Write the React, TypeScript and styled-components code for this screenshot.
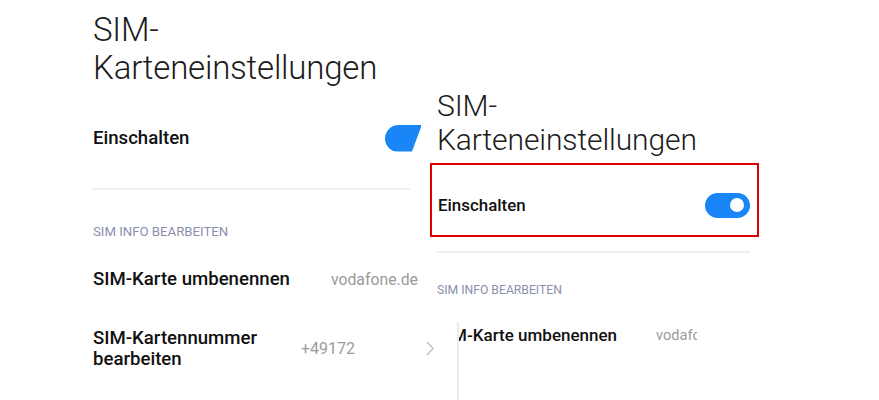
import React from "react";
import styled, { createGlobalStyle } from "styled-components";

const Global = createGlobalStyle`
  html, body { margin: 0; padding: 0; background: #ffffff; }
  body { font-family: Roboto, "Noto Sans", "Liberation Sans", Arial, sans-serif; }
`;

const Stage = styled.div`
  position: relative;
  width: 879px;
  height: 400px;
  overflow: hidden;
  background: #ffffff;
`;

const Screen = styled.div<{ $top: number; $left: number; $width: number }>`
  box-sizing: content-box;
  width: ${(p) => p.$width}px;
  padding: ${(p) => p.$top}px 0 0 ${(p) => p.$left}px;
  display: flex;
  flex-direction: column;
`;

/* second screenshot laid over the first one */
const Overlay = styled.div`
  position: absolute;
  left: 421px;
  top: 0;
  width: 458px;
  height: 400px;
  background: #ffffff;
  clip-path: polygon(0 0, 100% 0, 100% 100%, 36px 100%, 36px 322px, 0 322px);
  &::before {
    content: "";
    position: absolute;
    left: 36px;
    top: 322px;
    bottom: 0;
    width: 2px;
    background: #ececec;
  }
`;

const Title = styled.h1<{ $size: number; $lh: number; $ls: number }>`
  margin: 0;
  font-weight: 300;
  font-size: ${(p) => p.$size}px;
  line-height: ${(p) => p.$lh}px;
  letter-spacing: ${(p) => p.$ls}px;
  color: #1c1c1c;
`;

const SwitchRow = styled.div<{ $h: number; $mt: number }>`
  display: flex;
  align-items: center;
  justify-content: space-between;
  height: ${(p) => p.$h}px;
  margin-top: ${(p) => p.$mt}px;
`;

const Highlight = styled.div`
  margin: 6px -9px 0 -7px;
  padding: 12px 7px 2px 6px;
  border: 2px solid #e10000;
`;

const Label = styled.span<{ $size: number; $lh?: number }>`
  flex: 1;
  font-weight: 500;
  font-size: ${(p) => p.$size}px;
  line-height: ${(p) => (p.$lh ? `${p.$lh}px` : "normal")};
  color: #111111;
`;

const Toggle = styled.div<{ $w: number; $h: number; $knob: number; $clipped?: boolean }>`
  position: relative;
  flex: none;
  width: ${(p) => p.$w}px;
  height: ${(p) => p.$h}px;
  border-radius: ${(p) => p.$h / 2}px;
  background: #1985f6;
  ${(p) => (p.$clipped ? "clip-path: polygon(0 0, 37px 0, 27px 100%, 0 100%);" : "")}
  &::after {
    content: "";
    display: ${(p) => (p.$knob > 0 ? "block" : "none")};
    position: absolute;
    top: 50%;
    right: ${(p) => (p.$h - p.$knob) / 2 + 1}px;
    width: ${(p) => p.$knob}px;
    height: ${(p) => p.$knob}px;
    margin-top: ${(p) => -p.$knob / 2}px;
    border-radius: 50%;
    background: #ffffff;
  }
`;

const Divider = styled.div<{ $mt: number; $w?: number }>`
  margin-top: ${(p) => p.$mt}px;
  width: ${(p) => (p.$w ? `${p.$w}px` : "100%")};
  height: 2px;
  background: #f0f0f0;
`;

const SectionHeader = styled.div<{ $size: number; $lh: number; $mt: number }>`
  margin-top: ${(p) => p.$mt}px;
  font-size: ${(p) => p.$size}px;
  line-height: ${(p) => p.$lh}px;
  font-weight: 400;
  color: #8a8fae;
`;

const ItemRow = styled.div<{ $h: number; $mt?: number }>`
  display: flex;
  align-items: center;
  min-height: ${(p) => p.$h}px;
  margin-top: ${(p) => p.$mt ?? 0}px;
`;

const Value = styled.span<{ $size: number; $mr: number; $max?: number }>`
  flex: none;
  font-size: ${(p) => p.$size}px;
  color: #9b9b9b;
  white-space: nowrap;
  overflow: hidden;
  margin-right: ${(p) => p.$mr}px;
  ${(p) => (p.$max ? `max-width: ${p.$max}px;` : "")}
`;

const ChevronBox = styled.span`
  flex: none;
  display: flex;
  width: 8px;
  height: 15px;
`;

const Chevron = () => (
  <ChevronBox>
    <svg width="8" height="15" viewBox="0 0 8 15" fill="none">
      <path d="M0.8 0.8 L7.2 7.5 L0.8 14.2" stroke="#b4b4b4" strokeWidth="1.1" />
    </svg>
  </ChevronBox>
);

export default function App() {
  return (
    <>
      <Global />
      <Stage>
        <Screen $top={11} $left={93} $width={341}>
          <Title $size={33} $lh={38} $ls={-0.2}>
            SIM-
            <br />
            Karteneinstellungen
          </Title>
          <SwitchRow $h={56} $mt={23}>
            <Label $size={18.6}>Einschalten</Label>
            <Toggle $w={49} $h={27} $knob={0} $clipped />
          </SwitchRow>
          <Divider $mt={22} $w={317} />
          <SectionHeader $size={13.2} $lh={16} $mt={34}>
            SIM INFO BEARBEITEN
          </SectionHeader>
          <ItemRow $h={56} $mt={11}>
            <Label $size={18.6}>SIM-Karte umbenennen</Label>
            <Value $size={15.8} $mr={8}>vodafone.de</Value>
            <Chevron />
          </ItemRow>
          <ItemRow $h={83}>
            <Label $size={18.6} $lh={21}>
              SIM-Kartennummer bearbeiten
            </Label>
            <Value $size={16} $mr={71}>+49172</Value>
            <Chevron />
          </ItemRow>
        </Screen>

        <Overlay>
          <Screen $top={89} $left={16} $width={313}>
            <Title $size={30} $lh={34} $ls={-0.1}>
              SIM-
              <br />
              Karteneinstellungen
            </Title>
            <Highlight>
              <SwitchRow $h={56} $mt={0}>
                <Label $size={16.9}>Einschalten</Label>
                <Toggle $w={45} $h={25} $knob={14} />
              </SwitchRow>
            </Highlight>
            <Divider $mt={14} />
            <SectionHeader $size={12.2} $lh={15} $mt={30}>
              SIM INFO BEARBEITEN
            </SectionHeader>
            <ItemRow $h={51} $mt={11}>
              <Label $size={17}>SIM-Karte umbenennen</Label>
              <Value $size={14.6} $mr={53} $max={41}>vodafone.de</Value>
            </ItemRow>
          </Screen>
        </Overlay>
      </Stage>
    </>
  );
}
